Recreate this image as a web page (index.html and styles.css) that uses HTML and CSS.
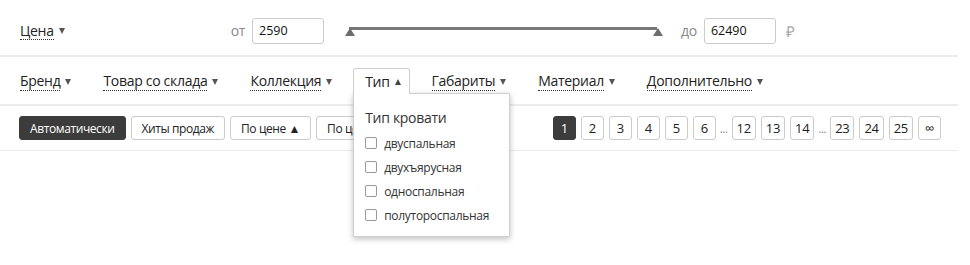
FILE: index.html
```html
<!DOCTYPE html>
<html lang="ru">
<head>
  <meta charset="UTF-8" />
  <title>Каталог</title>
  <link rel="stylesheet" href="styles.css">
</head>
<body>
  <div class="catalog">

    <div class="price-row">
      <span class="filter-link">Цена</span><span class="arrow"></span>
      <div class="range">
        <span class="range-label">от</span>
        <input type="text" class="range-input" value="2590">
        <div class="slider">
          <div class="slider-bar"></div>
          <span class="thumb thumb-left"></span>
          <span class="thumb thumb-right"></span>
        </div>
        <span class="range-label">до</span>
        <input type="text" class="range-input" value="62490">
        <span class="rub">₽</span>
      </div>
    </div>

    <div class="filters-row">
      <div class="filter"><span class="filter-link">Бренд</span><span class="arrow"></span></div>
      <div class="filter"><span class="filter-link">Товар со склада</span><span class="arrow"></span></div>
      <div class="filter"><span class="filter-link">Коллекция</span><span class="arrow"></span></div>
      <div class="filter filter-open">
        <div class="tab">Тип<span class="arrow arrow-up"></span></div>
        <div class="dropdown">
          <div class="dropdown-title">Тип кровати</div>
          <label class="check"><span class="box"></span>двуспальная</label>
          <label class="check"><span class="box"></span>двухъярусная</label>
          <label class="check"><span class="box"></span>односпальная</label>
          <label class="check"><span class="box"></span>полутороспальная</label>
        </div>
      </div>
      <div class="filter"><span class="filter-link">Габариты</span><span class="arrow"></span></div>
      <div class="filter"><span class="filter-link">Материал</span><span class="arrow"></span></div>
      <div class="filter"><span class="filter-link">Дополнительно</span><span class="arrow"></span></div>
    </div>

    <div class="sort-row">
      <div class="sort">
        <button class="btn btn-active">Автоматически</button>
        <button class="btn">Хиты продаж</button>
        <button class="btn">По цене ▲</button>
        <button class="btn">По цене ▼</button>
      </div>
      <div class="pages">
        <span class="page page-current">1</span>
        <span class="page">2</span>
        <span class="page">3</span>
        <span class="page">4</span>
        <span class="page">5</span>
        <span class="page">6</span>
        <span class="dots">...</span>
        <span class="page">12</span>
        <span class="page">13</span>
        <span class="page">14</span>
        <span class="dots">...</span>
        <span class="page">23</span>
        <span class="page">24</span>
        <span class="page">25</span>
        <span class="page">∞</span>
      </div>
    </div>

  </div>
</body>
</html>
```

FILE: styles.css
```css
html, body {
  min-height: 265px;
}

body {
  margin: 0;
  font-family: "Open Sans", Arial, sans-serif;
  font-size: 14px;
  letter-spacing: -0.3px;
  color: #222;
  background: #fff;
}

.catalog {
  width: 958px;
  min-height: 265px;
}

/* price */
.price-row {
  display: flex;
  align-items: center;
  height: 49px;
  padding: 6px 0 0 20px;
  border-bottom: 2px solid #ebebeb;
}

.filter-link {
  border-bottom: 1px dotted #333;
  line-height: 17px;
}

.arrow {
  display: inline-block;
  width: 0;
  height: 0;
  margin-left: 5px;
  vertical-align: 1px;
  border-left: 3.5px solid transparent;
  border-right: 3.5px solid transparent;
  border-top: 6px solid #555;
}

.arrow-up {
  border-top: none;
  border-bottom: 6px solid #444;
  vertical-align: 2px;
}

.range {
  display: flex;
  align-items: center;
  margin-left: 166px;
}

.range-label {
  color: #888;
  margin-right: 7px;
}

.range-input {
  width: 72px;
  height: 26px;
  box-sizing: border-box;
  border: 1px solid #ccc;
  border-radius: 3px;
  padding: 0 6px;
  font-family: inherit;
  font-size: 12.5px;
  color: #111;
}

.slider {
  position: relative;
  width: 308px;
  height: 20px;
  margin: 0 24px 0 25px;
}

.slider-bar {
  margin-top: 6px;
  height: 3px;
  background: #777;
}

.thumb {
  position: absolute;
  top: 7px;
  width: 0;
  height: 0;
  border-left: 5px solid transparent;
  border-right: 5px solid transparent;
  border-bottom: 8px solid #6d6d6d;
}

.thumb-left {
  left: -4px;
}

.thumb-right {
  right: -6px;
}

.rub {
  color: #aaa;
  font-size: 15px;
  margin-left: 10px;
}

/* filters */
.filters-row {
  display: flex;
  align-items: center;
  height: 47px;
  padding-left: 20px;
  border-bottom: 2px solid #ebebeb;
}

.filter {
  margin-right: 32px;
  white-space: nowrap;
}

.filter-open {
  position: relative;
  margin-left: -11px;
  margin-right: 22px;
  align-self: flex-end;
}

.tab {
  position: relative;
  z-index: 3;
  height: 26px;
  box-sizing: border-box;
  padding: 3px 8px 0 11px;
  border: 1px solid #cfcfcf;
  border-bottom: none;
  border-radius: 3px 3px 0 0;
  background: #fff;
  margin-bottom: 10px;
}

.dropdown {
  position: absolute;
  z-index: 2;
  left: 0;
  top: 25px;
  width: 157px;
  height: 144px;
  padding: 14px 0 0 11px;
  box-sizing: border-box;
  background: #fff;
  border: 1px solid #cfcfcf;
  box-shadow: 0 2px 6px rgba(0, 0, 0, 0.25);
}

.dropdown-title {
  font-size: 14px;
  color: #333;
  margin-bottom: 4px;
}

.check {
  display: flex;
  align-items: center;
  height: 24px;
  font-size: 12px;
  color: #333;
}

.box {
  width: 12px;
  height: 12px;
  box-sizing: border-box;
  border: 1px solid #999;
  border-radius: 2px;
  margin-right: 7px;
}

/* sort + pages */
.sort-row {
  display: flex;
  align-items: center;
  justify-content: space-between;
  height: 44px;
  padding: 0 17px 0 19px;
  border-bottom: 1px solid #ebebeb;
}

.sort {
  display: flex;
  gap: 5px;
}

.btn {
  height: 24px;
  padding: 0 10px;
  font-family: inherit;
  font-size: 12px;
  letter-spacing: -0.4px;
  color: #222;
  background: #fff;
  border: 1px solid #ccc;
  border-radius: 3px;
}

.btn-active {
  background: #3c3c3c;
  border-color: #3c3c3c;
  color: #fff;
}

.pages {
  display: flex;
  align-items: center;
  gap: 5px;
}

.page {
  min-width: 23px;
  height: 24px;
  box-sizing: border-box;
  padding: 0 4px;
  display: flex;
  align-items: center;
  justify-content: center;
  border: 1px solid #ccc;
  border-radius: 3px;
  font-size: 13px;
  color: #222;
}

.page-current {
  background: #3c3c3c;
  border-color: #3c3c3c;
  color: #fff;
}

.dots {
  color: #777;
  font-size: 11px;
  margin: 0 -1px;
}
```
